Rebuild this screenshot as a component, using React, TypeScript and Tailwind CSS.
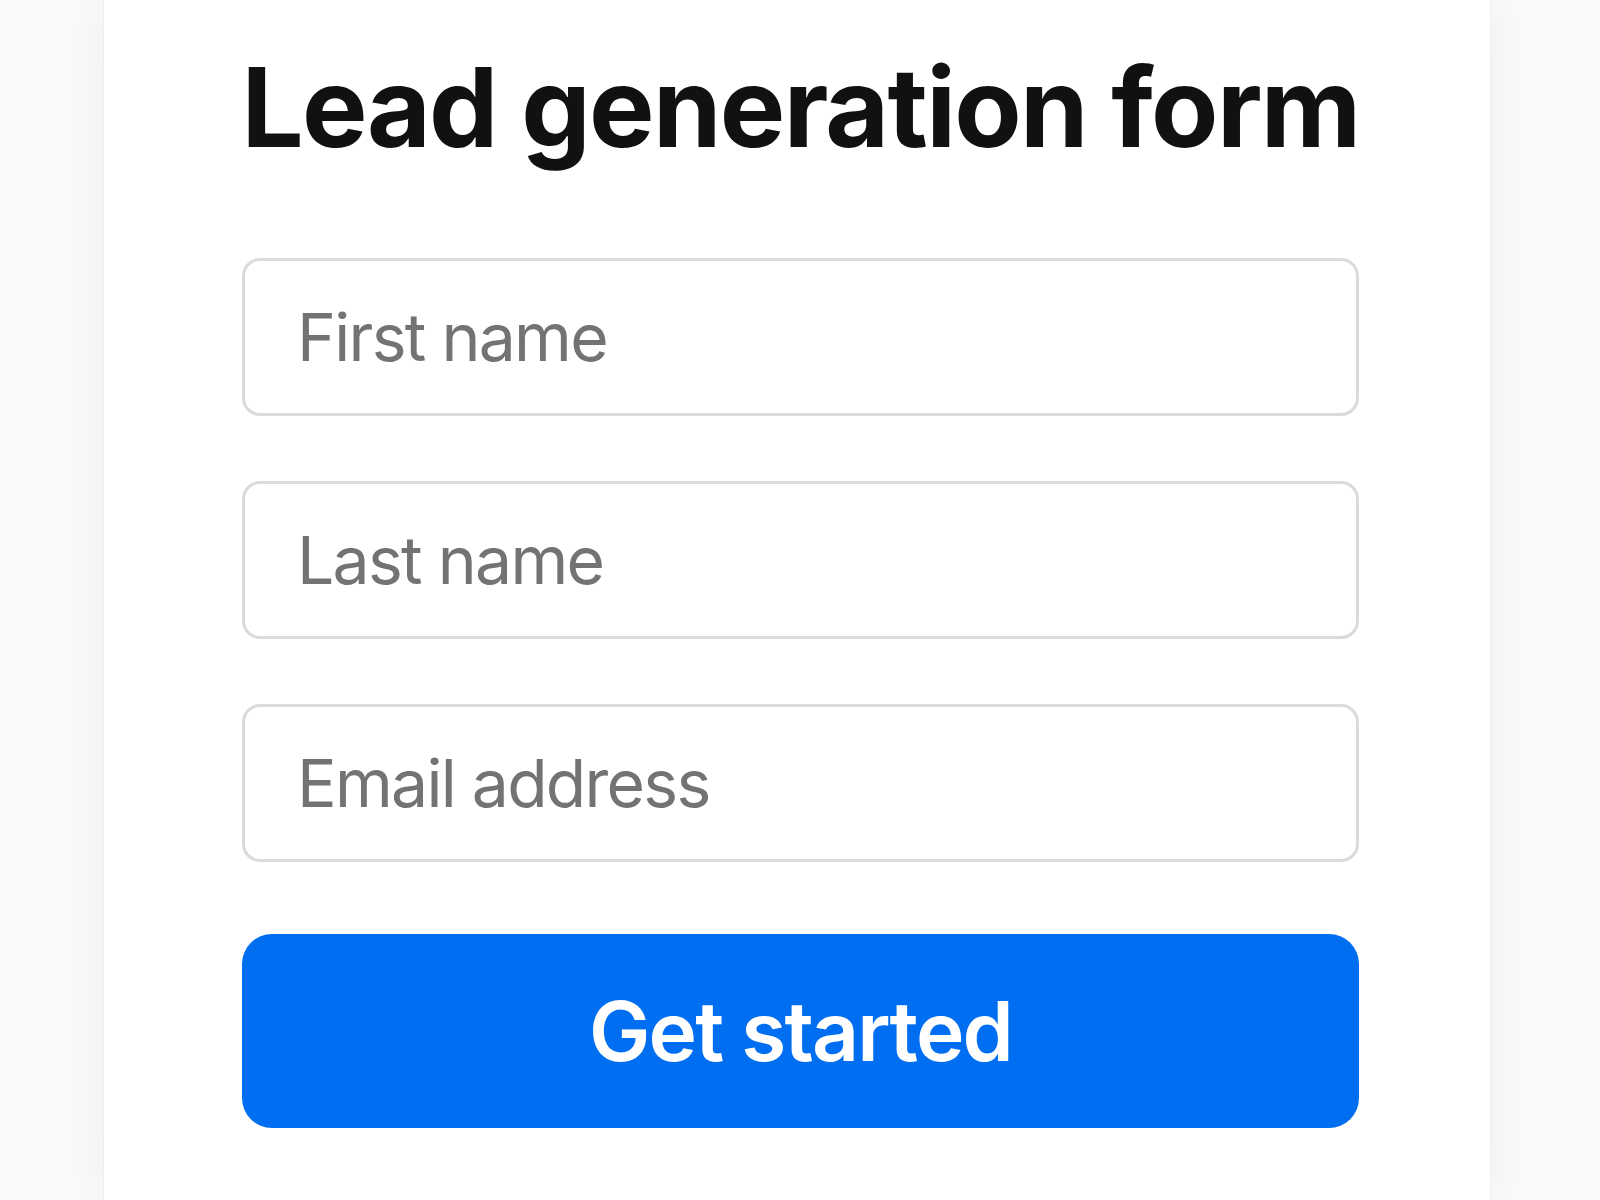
import React from 'react';

const fields = ['First name', 'Last name', 'Email address'];

const App: React.FC = () => {
    return (
        <div className="w-full h-[1200px] overflow-hidden bg-[#fafafa] flex" style={{ fontFamily: 'Inter, "Liberation Sans", sans-serif' }}>
            <div className="ml-[104px] w-[1386px] h-full bg-white flex flex-col items-center pl-[7px] pt-[52px] shadow-[0_0_1px_rgba(0,0,0,0.18),0_0_50px_rgba(0,0,0,0.05)]">
                <h1 className="text-[110px] leading-[110px] font-bold text-[#111111] tracking-[-0.015em]">Lead generation form</h1>
                <form className="w-[1117px] mt-[96px] flex flex-col" onSubmit={e => e.preventDefault()}>
                    {fields.map((f, i) => (
                        <input
                            key={f}
                            type="text"
                            placeholder={f}
                            className={`h-[158px] w-full rounded-[18px] border-[3px] border-[#dadada] bg-white pl-[52px] text-[66px] tracking-[-0.026em] text-[#222] placeholder-[#737373] focus:outline-none ${i > 0 ? 'mt-[65px]' : ''}`}
                        />
                    ))}
                    <button
                        type="submit"
                        className="mt-[72px] h-[194px] w-full rounded-[30px] bg-[#006ef0] text-white text-[82px] font-semibold tracking-[-0.022em]"
                    >
                        Get started
                    </button>
                </form>
            </div>
        </div>
    );
};

export default App;
